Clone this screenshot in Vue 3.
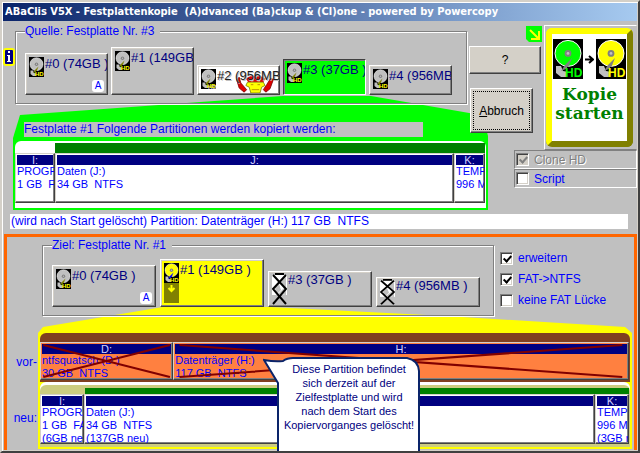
<script setup>
import { ref } from 'vue'

const sources = [
  { label: '#0 (74GB )', size: 'mid', badge: true },
  { label: '#1 (149GB )', size: 'tall' },
  { label: '#2 (956MB )', size: 'low', mascot: true },
  { label: '#3 (37GB )', size: 'short', active: true },
  { label: '#4 (956MB )', size: 'low' },
]
const targets = [
  { label: '#0 (74GB )', size: 'mid', badge: true },
  { label: '#1 (149GB )', size: 'tall', chosen: true },
  { label: '#3 (37GB )', size: 'short', blocked: true },
  { label: '#4 (956MB )', size: 'low', blocked: true },
]
const copied = [
  { drive: 'I:', lines: ['PROGRA', '1 GB  FAT'], share: 36 },
  { drive: 'J:', lines: ['Daten (J:)', '34 GB  NTFS'], share: 395 },
  { drive: 'K:', lines: ['TEMP', '996 MB'], share: 27 },
]
const before = [
  { drive: 'D:', lines: ['ntfsquatsch (D:)', '30 GB  NTFS'], share: 129 },
  { drive: 'H:', lines: ['Datenträger (H:)', '117 GB  NTFS'], share: 451 },
]
const after = [
  { drive: 'I:', lines: ['PROGRA', '1 GB  FAT', '(6GB neu)'], share: 40 },
  { drive: 'J:', lines: ['Daten (J:)', '34 GB  NTFS', '(137GB neu)'], share: 507 },
  { drive: 'K:', lines: ['TEMP', '996 MB', '(3GB neu)'], share: 30 },
]
const clone = ref(true)
const script = ref(false)
const expand = ref(true)
const convert = ref(true)
const noGap = ref(false)
</script>

<template>
  <div class="window">
    <svg class="defs" width="0" height="0" aria-hidden="true">
      <symbol id="disk" viewBox="0 0 15 20">
        <rect width="15" height="20" fill="#000" />
        <circle cx="7.5" cy="7.2" r="6.5" fill="var(--disc)" stroke="#fff" stroke-width=".5" />
        <circle cx="7.5" cy="7.2" r="1.7" fill="#808080" />
        <circle cx="7.5" cy="7.2" r=".7" fill="#c0c0c0" />
        <path d="M1.500 13.500h2.500l1 2.500 3 .5v2.500h-4l-2.500-2z" fill="#c0c0c0" />
        <path d="M9.500 9.500L7.500 14.500L4 16L6 13z" fill="var(--arm)" />
        <rect x="7" y="14" width="8" height="6" fill="#000" />
        <text x="6" y="19" font-size="6" font-weight="bold" font-family="Liberation Sans, sans-serif" fill="var(--tag)">HD</text>
      </symbol>
    </svg>

    <header class="title">ABaClis V5X - Festplattenkopie&nbsp; (A)dvanced (Ba)ckup &amp; (Cl)one - powered by Powercopy</header>

    <section class="top">
      <button class="info" aria-label="Info">
        <svg viewBox="0 0 12 18"><rect width="12" height="18" rx="3" fill="#ff0" /><rect x="2" y="2" width="8" height="14" rx="1" fill="#000080" /><path d="M5 3h2v2h-2zM4 7h3v6h1v1h-4v-1h1v-5h-1z" fill="#fff" /></svg>
      </button>

      <div class="source">
        <fieldset>
          <legend>Quelle: Festplatte Nr. #3</legend>
          <div class="disks narrow">
            <button v-for="d in sources" :key="d.label" class="disk" :class="[d.size, { active: d.active, mascot: d.mascot }]">
              <svg v-if="d.mascot" class="creature" viewBox="0 0 46 24">
                <path d="M1 8l3-3 2 7 7 8-3 3-6-5zM45 8l-3-2-5 8-4 6 3 3 5-4z" fill="#e00000" stroke="#800000" />
                <path d="M12 7l5-3h13l5 3-2 4h-18z" fill="#e00000" />
                <path d="M14 11h19l2 4-4 2-2 7h-11l-2-7-4-2z" fill="#ff0" stroke="#808000" />
                <path d="M18 9h3m5 0h3" stroke="#fff" stroke-width="2" />
                <path d="M18 14h3m5 0h3M19 20h9" stroke="#b08000" />
              </svg>
              <svg class="hd"><use href="#disk" /></svg>
              <span>{{ d.label }}</span>
              <b v-if="d.badge" class="badge">A</b>
            </button>
          </div>
        </fieldset>

        <div class="green">
          <p class="caption">Festplatte #1 Folgende Partitionen werden kopiert werden:</p>
          <div class="copied">
            <div class="stripe"></div>
            <div class="parts">
              <div v-for="p in copied" :key="p.drive" class="part" :style="{ flexGrow: p.share }">
                <h3>{{ p.drive }}</h3>
                <p v-for="l in p.lines" :key="l">{{ l }}</p>
              </div>
            </div>
          </div>
        </div>
      </div>

      <div class="controls">
        <div class="side">
          <svg class="tag" viewBox="0 0 16 16"><path d="M0 0h16v16h-13l-3-3z" fill="#0f0" /><path d="M4 4l8 8M13 5v8h-8" fill="none" stroke="#ff0" stroke-width="2" /></svg>
          <button class="plain help">?</button>
          <button class="plain cancel"><span><u>A</u>bbruch</span></button>
        </div>
        <button class="start">
          <span class="face">
            <span class="pair">
              <svg class="from"><use href="#disk" /></svg>
              <svg class="arrow" viewBox="0 0 9 9"><path d="M0 4.500h7M4 1l4 3.500-4 3.500" fill="none" stroke="#000" stroke-width="2" /></svg>
              <svg class="to"><use href="#disk" /></svg>
            </span>
            <span class="go">Kopie<br>starten</span>
          </span>
        </button>
        <div class="options">
          <label class="off"><input v-model="clone" type="checkbox" disabled>Clone HD</label>
          <label><input v-model="script" type="checkbox">Script</label>
        </div>
      </div>
    </section>

    <p class="status">(wird nach Start gelöscht) Partition: Datenträger (H:) 117 GB&nbsp; NTFS</p>

    <section class="target">
      <div class="choose">
        <fieldset>
          <legend>Ziel: Festplatte Nr. #1</legend>
          <div class="disks wide">
            <button v-for="d in targets" :key="d.label" class="disk" :class="[d.size, { chosen: d.chosen, locked: d.blocked }]">
              <svg v-if="d.blocked" class="blocked" viewBox="0 0 15 32" preserveAspectRatio="none">
                <rect y="2" width="15" height="20" fill="#fff" />
                <path d="M9 8l5-4v18l-8-1 6-6zM3 14l4-3 2 6-5 5z" fill="#c0c0c0" />
                <path d="M3 1h9M1 2L14 16L1 31M14 2L1 16L14 31" fill="none" stroke="#000" stroke-width="2" />
              </svg>
              <span v-else class="stack">
                <svg class="hd"><use href="#disk" /></svg>
                <svg v-if="d.chosen" class="down" viewBox="0 0 15 20"><rect width="15" height="20" fill="#808000" /><path d="M7.500 2v6M4.500 5l3 3 3-3" fill="none" stroke="#ff0" stroke-width="2" /></svg>
              </span>
              <span>{{ d.label }}</span>
              <b v-if="d.badge" class="badge">A</b>
            </button>
          </div>
        </fieldset>
        <div class="flags">
          <label><input v-model="expand" type="checkbox">erweitern</label>
          <label><input v-model="convert" type="checkbox">FAT-&gt;NTFS</label>
          <label><input v-model="noGap" type="checkbox">keine FAT Lücke</label>
        </div>
      </div>

      <div class="result">
        <div class="names"><span>vor-</span><span>neu:</span></div>
        <div class="yellow">
          <div class="old">
            <div class="parts">
              <div v-for="p in before" :key="p.drive" class="part doomed" :style="{ flexGrow: p.share }">
                <h3>{{ p.drive }}</h3>
                <p v-for="l in p.lines" :key="l">{{ l }}</p>
                <svg class="cross" viewBox="0 0 100 100" preserveAspectRatio="none"><path d="M1 3L99 97M1 97L99 3" stroke="#800000" stroke-width="2" vector-effect="non-scaling-stroke" /></svg>
              </div>
            </div>
          </div>
          <div class="new">
            <div class="stripe"></div>
            <div class="parts">
              <div v-for="p in after" :key="p.drive" class="part" :style="{ flexGrow: p.share }">
                <h3>{{ p.drive }}</h3>
                <p v-for="l in p.lines" :key="l">{{ l }}</p>
              </div>
            </div>
          </div>
        </div>
        <div class="callout">
          <svg viewBox="0 0 157 96"><path d="M15 100V26L1 3Q12 5 20 4Q24 1 30 1H144Q155 3 156 14V100" fill="#fff" stroke="#0a246a" stroke-width="2" /></svg>
          <p>Diese Partition befindet<br>sich derzeit auf der<br>Zielfestplatte und wird<br>nach dem Start des<br>Kopiervorganges gelöscht!</p>
        </div>
      </div>
    </section>
  </div>
</template>

<style>
body { margin: 0; background: #c0c0c0; }
</style>

<style scoped>
* { box-sizing: border-box; }
p, h3 { margin: 0; }
button { font: inherit; color: inherit; padding: 0; }
.window {
  --disc: #c0c0c0;
  --tag: #ff0;
  --arm: #808000;
  display: flex;
  flex-direction: column;
  min-height: 100vh;
  overflow: hidden;
  padding: 1px;
  border: 2px solid;
  border-color: #d4d0c8 #404040 #404040 #d4d0c8;
  box-shadow: inset 1px 1px #fff, inset -1px -1px #d4d0c8;
  background: #c0c0c0;
  color: #00f;
  font: 12px/16px "Liberation Sans", Arial, sans-serif;
  white-space: pre;
}
.defs { position: absolute; }
.title {
  height: 18px;
  padding-left: 2px;
  background: linear-gradient(90deg, #0a246a, #a6caf0);
  color: #fff;
  font: bold 11px/18px "DejaVu Sans Condensed", "DejaVu Sans", sans-serif;
}
.top { display: grid; grid-template-columns: 12px 1fr 168px; padding-top: 2px; }
.info { align-self: start; height: 18px; margin-top: 25px; border: 0; background: none; }
.info svg { display: block; width: 12px; height: 18px; }
.source { min-width: 0; }
fieldset {
  position: relative;
  z-index: 1;
  min-width: 0;
  margin: 0;
  padding: 0 8px 8px 9px;
  border: 1px solid #808080;
  box-shadow: inset 1px 1px #fff, 1px 1px #fff;
}
legend { height: 16px; padding: 0 6px 0 0; background: #c0c0c0; }
.source fieldset { margin-right: 2px; }
.disks { display: flex; align-items: flex-end; }
.narrow { gap: 3px; height: 56px; }
.wide { gap: 4px; height: 54px; }
.disk {
  position: relative;
  display: flex;
  align-items: flex-start;
  gap: 1px;
  flex: 0 1 83px;
  min-width: 0;
  padding: 3px 0 0 3px;
  overflow: hidden;
  border: 1px solid;
  border-color: #fff #404040 #404040 #fff;
  box-shadow: inset -1px -1px #808080, inset 1px 1px #d4d0c8;
  background: #c0c0c0;
  color: #000080;
  font-size: 13px;
  line-height: 14px;
}
.wide .disk { flex-basis: 104px; }
.tall { height: 48px; }
.mid { height: 42px; }
.short { height: 36px; }
.low { height: 30px; }
.wide .locked { padding-top: 1px; }
.active { border-color: #404040 #fff #fff #404040; background: #0f0; box-shadow: inset 1px 1px #808080; }
.mascot { background: #fff; color: #202020; text-shadow: 1px 1px #c0c0c0; }
.creature { position: absolute; right: 1px; bottom: 1px; width: 46px; height: 20px; }
.chosen { background: #ff0; }
.chosen .hd { --disc: #ff0; --arm: #00f; }
.disk span { position: relative; }
.hd { display: block; flex: none; width: 15px; height: 20px; }
.stack { flex: none; width: 15px; }
.down { display: block; width: 15px; height: 20px; }
.blocked { flex: none; width: 15px; height: 32px; }
.low .blocked { height: 26px; }
.badge {
  position: absolute;
  right: 3px;
  bottom: 2px;
  width: 12px;
  height: 12px;
  border-radius: 3px;
  background: #fff;
  color: #00f;
  font: 10px/12px "Liberation Sans", Arial, sans-serif;
  text-align: center;
}
.green {
  margin: -8px -19px 0 -2px;
  padding: 26px 2px 2px;
  background: #0f0;
  clip-path: polygon(0 100%, 0 42px, 7px 19px, 270px 0, 358px 0, 462px 18px, 472px 28px, 100% 40px, 100% 100%);
}
.caption { height: 15px; margin: 0 63px 4px 9px; background: #c0c0c0; line-height: 15px; }
.copied { padding: 2px 1px 5px 0; background: #fff; border-radius: 6px 6px 0 0; }
.stripe { height: 10px; margin-left: 40px; background: #008000; }
.parts { display: flex; }
.part {
  position: relative;
  flex: 1 1 0;
  min-width: 0;
  overflow: hidden;
  height: 50px;
  padding: 1px;
  border: 1px solid;
  border-color: #d4d0c8 #404040 #404040 #d4d0c8;
  box-shadow: inset -1px -1px #808080;
  background: #fff;
  font-size: 11px;
  line-height: 13px;
}
.part h3 { height: 10px; background: #000080; color: #d0d0ff; font: 11px/11px "Liberation Sans", Arial, sans-serif; text-align: center; }
.controls { position: relative; z-index: 2; display: grid; grid-template-columns: 75px 93px; align-content: start; padding-top: 2px; }
.side { display: flex; flex-direction: column; align-items: flex-start; padding-top: 1px; }
.tag { align-self: flex-end; width: 16px; height: 16px; margin-right: 2px; }
.plain {
  border: 1px solid;
  border-color: #fff #404040 #404040 #fff;
  box-shadow: inset -1px -1px #808080;
  background: #d4d0c8;
  color: #000;
}
.help { width: 72px; height: 28px; margin-top: 4px; }
.cancel { width: 63px; height: 45px; margin: 14px 0 0 1px; padding: 2px; }
.cancel span { display: flex; align-items: center; justify-content: center; height: 100%; border: 1px dotted #000; }
.start { height: 125px; padding: 2px 3px 2px 1px; border: 1px solid; border-color: #fff #c0c0c0 #808080 #fff; background: #c0c0c0; }
.face { display: flex; flex-direction: column; align-items: center; height: 119px; padding-top: 5px; border: 6px solid; border-color: #ff0 #808000 #808000 #ff0; border-radius: 6px; background: #fff; }
.pair { display: flex; align-items: center; gap: 2px; }
.from, .to { width: 30px; height: 40px; --arm: #808080; }
.from { --disc: #0f0; --tag: #0f0; }
.to { --disc: #ff0; }
.arrow { width: 9px; height: 9px; }
.go { margin-top: 6px; color: #008000; font: bold 17px/19px "DejaVu Serif", serif; text-align: center; }
.options { grid-column: 1 / -1; margin: 0 0 0 45px; }
.options label { display: flex; align-items: center; gap: 5px; height: 19px; padding-left: 1px; border: 1px solid; border-color: #808080 #fff #fff #808080; }
.off { color: #808080; text-shadow: 1px 1px #fff; }
input {
  appearance: none;
  flex: none;
  width: 13px;
  height: 13px;
  margin: 0;
  border: 1px solid;
  border-color: #808080 #fff #fff #808080;
  box-shadow: inset 1px 1px #404040, inset -1px -1px #d4d0c8;
  background: #fff;
}
input:checked::after { content: ""; display: block; width: 3px; height: 6px; margin: 1px 0 0 4px; border: solid #000; border-width: 0 2px 2px 0; transform: rotate(42deg); }
input:disabled { background: #d4d0c8; }
input:disabled::after { border-color: #808080; }
.status { height: 15px; margin: 4px 9px 5px 7px; padding-left: 1px; background: #fff; line-height: 15px; }
.target { flex: 1; margin-left: 1px; border: 3px solid #ff6600; border-bottom: 0; }
.choose { display: grid; grid-template-columns: 452px 1fr; padding-left: 35px; }
.flags { display: flex; flex-direction: column; gap: 5px; padding: 13px 0 0 6px; }
.flags label { display: flex; align-items: center; gap: 5px; height: 16px; }
.result { position: relative; display: grid; grid-template-columns: 31px 1fr; margin: -9px 2px 0 0; }
.names { display: grid; grid-template-rows: 50px 50px; align-content: end; justify-items: end; row-gap: 6px; padding: 0 1px 3px 0; }
.names span { line-height: 16px; padding-top: 14px; }
.yellow {
  min-width: 0;
  padding: 26px 2px 2px;
  background: #ff0;
  clip-path: polygon(0 100%, 0 26px, 5px 20px, 125px 0, 232px 0, 408px 9px, calc(100% - 7px) 20px, 100% 26px, 100% 100%);
}
.old { padding: 9px 1px 2px 0; background: #804020; border-radius: 6px 6px 0 0; }
.old .part { height: 38px; }
.doomed { background: #ff8040; }
.cross { position: absolute; inset: 1px; width: calc(100% - 2px); height: calc(100% - 2px); }
.new { margin-top: 3px; padding: 3px 1px 3px 0; background: #cccc80; border-radius: 6px 6px 0 0; box-shadow: 0 -3px #fff; }
.new .stripe { height: 6px; margin-left: 45px; }
.callout { position: absolute; left: 256px; bottom: -3px; width: 157px; height: 95px; }
.callout svg { position: absolute; inset: 0; width: 157px; height: 96px; }
.callout p { position: relative; padding: 5px 0 0 15px; color: #000080; font-size: 11px; line-height: 14px; text-align: center; }
</style>
